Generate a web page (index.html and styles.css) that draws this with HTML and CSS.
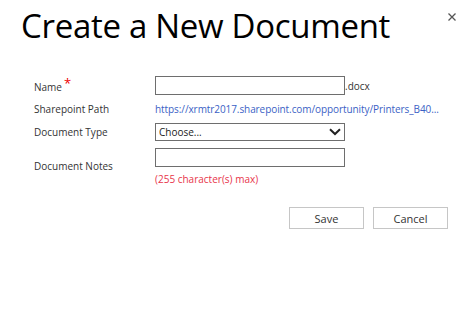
FILE: index.html
```html
<!DOCTYPE html>
<html>
<head>
<meta charset="utf-8">
<link rel="stylesheet" href="styles.css">
</head>
<body>
<div class="dialog">
  <header class="head">
    <h1 class="title">Create a New Document</h1>
    <button class="close" aria-label="Close">
      <svg width="8" height="8" viewBox="0 0 8 8"><path d="M0.5 0.5L7.5 7.5M7.5 0.5L0.5 7.5" stroke="#555" stroke-width="1.3" fill="none"/></svg>
    </button>
  </header>
  <div class="form">
    <div class="label label-name">Name<span class="req">*</span></div>
    <div class="field row-name"><span class="input"></span><span class="ext">.docx</span></div>

    <div class="label">Sharepoint Path</div>
    <div class="field"><span class="link">https://xrmtr2017.sharepoint.com/opportunity/Printers_B40...</span></div>

    <div class="label">Document Type</div>
    <div class="field"><span class="select"><span>Choose...</span>
      <svg width="12" height="8" viewBox="0 0 12 8"><path d="M1 1.2L6 6L11 1.2" stroke="#222" stroke-width="2" fill="none"/></svg></span></div>

    <div class="label label-notes">Document Notes</div>
    <div class="field notes"><span class="input"></span><span class="hint">(255 character(s) max)</span></div>
  </div>
  <div class="actions">
    <button class="btn">Save</button>
    <button class="btn">Cancel</button>
  </div>
</div>
</body>
</html>
```
FILE: styles.css
```css
html, body {
  margin: 0;
  padding: 0;
  background: #fff;
}
body {
  font-family: "Segoe UI", "Open Sans", "Noto Sans", sans-serif;
  color: #222;
}
.dialog {
  width: 470px;
  height: 320px;
  position: relative;
}
.head {
  display: flex;
  justify-content: space-between;
  align-items: flex-start;
  padding: 5px 14px 0 21px;
}
.title {
  margin: 0;
  font-size: 33px;
  font-weight: 400;
  line-height: 42px;
  color: #000;
  letter-spacing: -0.3px;
}
.close {
  border: 0;
  background: none;
  padding: 0;
  margin-top: 8px;
  width: 8px;
  height: 8px;
  display: flex;
}
.form {
  display: grid;
  grid-template-columns: 121px 1fr;
  align-items: center;
  row-gap: 4px;
  padding: 28px 0 0 34px;
  font-size: 10px;
}
.label {
  color: #333;
}
.label-name {
  padding-top: 2px;
}
.label-notes {
  padding-top: 1px;
}
.req {
  color: #e00;
  font-size: 13px;
  position: relative;
  top: -3px;
  margin-left: 2px;
}
.field {
  display: flex;
  align-items: center;
  min-height: 19px;
}
.input {
  display: block;
  width: 188px;
  height: 17px;
  border: 1px solid #6e6e6e;
}
.ext {
  color: #333;
  font-size: 10px;
  margin-top: 2px;
}
.link {
  color: #3b5fc5;
  font-size: 10px;
  letter-spacing: -0.08px;
  white-space: nowrap;
}
.select {
  display: flex;
  align-items: center;
  justify-content: space-between;
  width: 182px;
  height: 16px;
  border: 1px solid #6e6e6e;
  padding: 0 3px;
  color: #222;
}
.notes {
  flex-direction: column;
  align-items: flex-start;
  gap: 5px;
  padding-top: 3px;
}
.hint {
  color: #e8344a;
  font-size: 10px;
}
.actions {
  display: flex;
  justify-content: flex-end;
  gap: 9px;
  padding: 21px 22px 0 0;
}
.btn {
  width: 75px;
  height: 22px;
  background: #fff;
  border: 1px solid #c6c6c6;
  font-family: inherit;
  font-size: 11px;
  color: #333;
  padding: 0;
}
```
